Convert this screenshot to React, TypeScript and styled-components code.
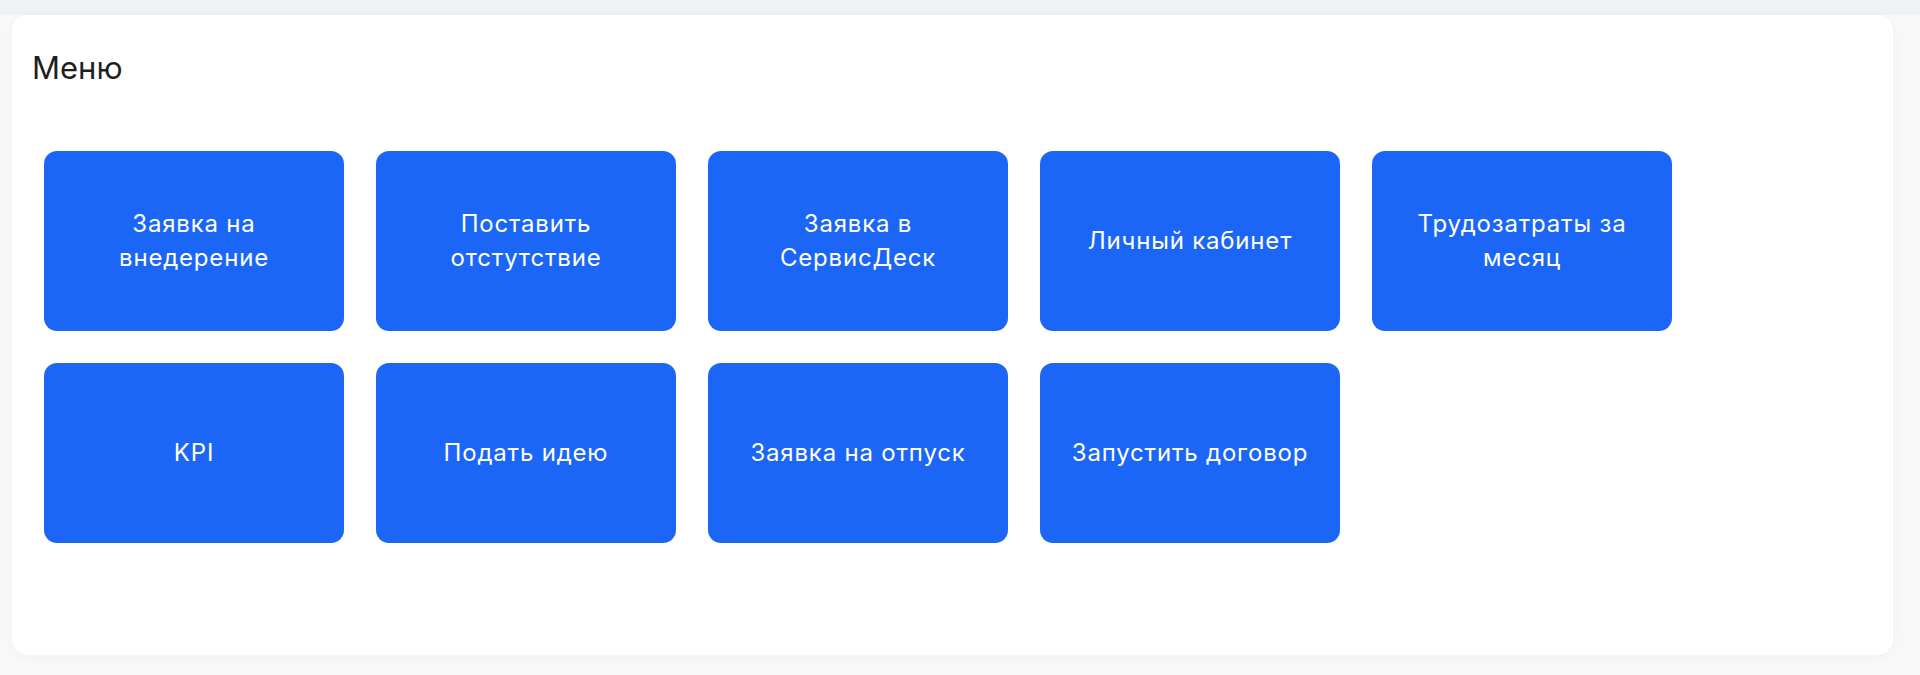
import * as React from 'react';
import styled, {createGlobalStyle} from 'styled-components';

const GlobalStyle = createGlobalStyle`
	html, body {
		margin: 0;
		padding: 0;
		background: #f8f8f8;
		font-family: Inter, "Noto Sans", sans-serif;
	}
`;

const TopStrip = styled.div`
	height: 15px;
	background: #eff2f5;
`;

const PageBody = styled.div`
	padding: 0 27px 20px 12px;
	min-height: 640px;
`;

const Panel = styled.section`
	box-sizing: border-box;
	height: 640px;
	background: #ffffff;
	border-radius: 16px;
	box-shadow: 0 2px 12px rgba(0, 0, 0, 0.03);
	padding: 33px 20px 26px;
`;

const Title = styled.h2`
	margin: 0;
	font-size: 31px;
	line-height: 40px;
	font-weight: 400;
	color: #1e1e1e;
`;

const Grid = styled.div`
	display: grid;
	grid-template-columns: repeat(5, 300px);
	grid-auto-rows: 180px;
	gap: 32px;
	margin: 63px 0 0 12px;
`;

const MenuButton = styled.a`
	display: flex;
	align-items: center;
	justify-content: center;
	box-sizing: border-box;
	padding: 0 28px;
	border-radius: 13px;
	background: #1b66f7;
	color: #ffffff;
	font-size: 24px;
	line-height: 34px;
	letter-spacing: 0.8px;
	text-align: center;
	text-decoration: none;
	cursor: pointer;
	&:hover {
		background: #1557d8;
	}
`;

const items = [
	'Заявка на внедерение',
	'Поставить отстутствие',
	'Заявка в СервисДеск',
	'Личный кабинет',
	'Трудозатраты за месяц',
	'KPI',
	'Подать идею',
	'Заявка на отпуск',
	'Запустить договор',
];

const App = () => {
	return (
		<>
			<GlobalStyle />
			<TopStrip />
			<PageBody>
				<Panel>
					<Title>Меню</Title>
					<Grid>
						{items.map(label => <MenuButton key={label}>{label}</MenuButton>)}
					</Grid>
				</Panel>
			</PageBody>
		</>
	);
};

export default App;
